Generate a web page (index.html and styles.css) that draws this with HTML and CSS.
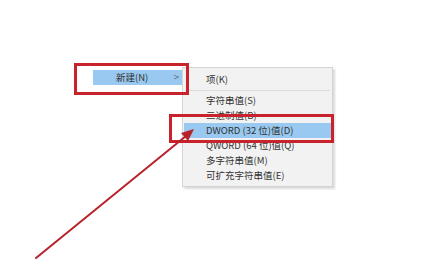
FILE: index.html
```html
<!DOCTYPE html>
<html lang="zh-CN">
<head>
    <meta charset="UTF-8">
    <title>新建 DWORD 值</title>
    <link rel="stylesheet" href="styles.css">
</head>
<body>
    <div id="stage">
        <div id="main-menu">
            <div class="item selected">
                <span class="label">新建(N)</span>
                <span class="more">&gt;</span>
            </div>
        </div>
        <ul id="sub-menu">
            <li>项(K)</li>
            <li class="sep"></li>
            <li>字符串值(S)</li>
            <li>二进制值(B)</li>
            <li class="selected">DWORD (32 位)值(D)</li>
            <li>QWORD (64 位)值(Q)</li>
            <li>多字符串值(M)</li>
            <li>可扩充字符串值(E)</li>
        </ul>
        <div class="mark" id="mark-new"></div>
        <div class="mark" id="mark-dword"></div>
        <svg id="arrow" width="433" height="273" viewBox="0 0 433 273">
            <line x1="36" y1="258" x2="186" y2="136" stroke="#b8222b" stroke-width="2" stroke-linecap="round"/>
            <polygon points="194,129 181,133 188,141" fill="#b8222b"/>
        </svg>
    </div>
</body>
</html>
```

FILE: styles.css
```css
*{
    margin: 0;
    padding: 0;
}
ul{
    list-style: none;
}
body{
    background: #fff;
    font-family: "Noto Sans CJK SC", "Noto Sans", sans-serif;
    color: #333;
    font-size: 9.5px;
}
#stage{
    width: 433px;
    height: 273px;
    position: relative;
    overflow: hidden;
}
#main-menu{
    position: absolute;
    left: 93px;
    top: 70px;
    width: 93px;
}
#main-menu .item{
    height: 15px;
    line-height: 15px;
    display: flex;
    justify-content: space-between;
    padding: 0 7px 0 23px;
}
.selected{
    background: #99c9f0;
}
#main-menu .more{
    color: #666;
}
#sub-menu{
    position: absolute;
    left: 182px;
    top: 67px;
    width: 149px;
    height: 114px;
    padding: 4px 0 0 0;
    background: #f2f2f2;
    border: 1px solid #d4d4d4;
    box-shadow: 2px 2px 2px rgba(0,0,0,0.15);
}
#sub-menu li{
    height: 15px;
    line-height: 15px;
    padding-left: 22px;
    margin: 0 1px;
    white-space: nowrap;
}
#sub-menu li.sep{
    height: 1px;
    margin: 3px 2px 2px;
    background: #dcdcdc;
}
.mark{
    position: absolute;
    border: 3px solid #c8232c;
    box-sizing: border-box;
}
#mark-new{
    left: 74px;
    top: 63px;
    width: 115px;
    height: 32px;
}
#mark-dword{
    left: 169px;
    top: 114px;
    width: 165px;
    height: 29px;
}
#arrow{
    position: absolute;
    left: 0;
    top: 0;
}
```
